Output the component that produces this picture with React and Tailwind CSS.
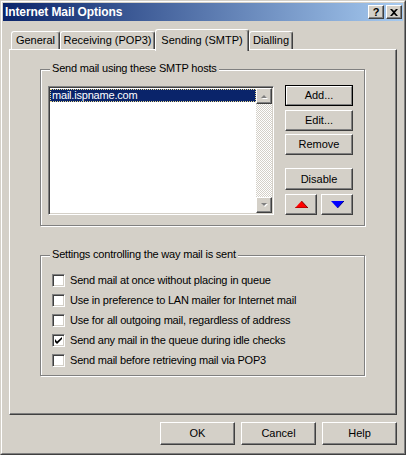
import React from 'react';

const FONT = { fontFamily: '"Liberation Sans", Arial, sans-serif' };

// classic raised 3D button edges
const raised =
  'border border-t-white border-l-white border-r-[#404040] border-b-[#404040] shadow-[inset_-1px_-1px_#808080]';
const sunken =
  'border border-t-[#808080] border-l-[#808080] border-r-white border-b-white shadow-[inset_1px_1px_#404040,inset_-1px_-1px_#d4d0c8]';

function Button({ children, className = '', isDefault = false }) {
  if (isDefault) {
    return (
      <div className={`border border-black ${className}`}>
        <div className="h-full w-full border border-t-white border-l-white border-r-[#808080] border-b-[#808080] flex items-center justify-center text-[11px] text-black">
          {children}
        </div>
      </div>
    );
  }
  return (
    <div className={`${raised} flex items-center justify-center text-[11px] text-black ${className}`}>
      {children}
    </div>
  );
}

function Group({ label, className = '', children }) {
  return (
    <div
      className={`relative border border-[#808080] shadow-[inset_1px_1px_#fff,1px_1px_#fff] ${className}`}
    >
      <span className="absolute -top-[8px] left-[9px] px-[2px] bg-[#d4d0c8] text-[11px] leading-[13px] text-black tracking-[-0.2px]">
        {label}
      </span>
      {children}
    </div>
  );
}

function ScrollArrow({ up }) {
  return (
    <svg width="7" height="5" viewBox="0 0 7 5">
      {up ? (
        <>
          <polygon points="1,5 4,2 7,5" fill="#fff" />
          <polygon points="0,4 3,1 6,4" fill="#808080" />
        </>
      ) : (
        <>
          <polygon points="1,1 4,4 7,1" fill="#fff" />
          <polygon points="0,0 3,3 6,0" fill="#808080" />
        </>
      )}
    </svg>
  );
}

function Checkbox({ checked, label }) {
  return (
    <div className="flex items-center h-[13px]">
      <div className={`w-[13px] h-[13px] bg-white ${sunken} flex items-center justify-center`}>
        {checked && (
          <svg width="7" height="7" viewBox="0 0 7 7">
            <path d="M0 2v3l2 2 5-5V0L2 4.5Z" fill="#000" />
          </svg>
        )}
      </div>
      <span className="ml-[5px] text-[11px] text-black tracking-[-0.2px] leading-[13px]">{label}</span>
    </div>
  );
}

function Tab({ label, selected, width }) {
  if (selected) {
    return (
      <div
        className={`${width} relative z-10 -mb-[2px] h-[22px] bg-[#d4d0c8] border-t border-l border-r border-t-white border-l-white border-r-[#404040] rounded-t-[3px] shadow-[inset_-1px_0_#808080] flex items-start justify-center pt-[2px] text-[11px] text-black`}
      >
        {label}
      </div>
    );
  }
  return (
    <div
      className={`${width} h-[18px] border-t border-l border-r border-t-white border-l-white border-r-[#404040] rounded-t-[3px] shadow-[inset_-1px_0_#808080] flex items-center justify-center text-[11px] text-black`}
    >
      {label}
    </div>
  );
}

export default function App() {
  const options = [
    { label: 'Send mail at once without placing in queue', checked: false },
    { label: 'Use in preference to LAN mailer for Internet mail', checked: false },
    { label: 'Use for all outgoing mail, regardless of address', checked: false },
    { label: 'Send any mail in the queue during idle checks', checked: true },
    { label: 'Send mail before retrieving mail via POP3', checked: false },
  ];

  return (
    <div
      className="w-[406px] h-[455px] bg-[#d4d0c8] border border-t-[#d4d0c8] border-l-[#d4d0c8] border-r-[#404040] border-b-[#404040] select-none"
      style={FONT}
    >
      <div className="h-full border border-t-white border-l-white border-r-[#808080] border-b-[#808080] p-px flex flex-col">
        {/* title bar */}
        <div className="h-[18px] flex items-center bg-[linear-gradient(to_right,#0a246a,#a6caf0)] pl-[2px] pr-[1px]">
          <span className="text-white font-bold text-[12px] leading-none tracking-[-0.1px]">Internet Mail Options</span>
          <div className="ml-auto flex gap-[2px]">
            <div className={`w-[16px] h-[14px] bg-[#d4d0c8] ${raised} flex items-center justify-center`}>
              <span className="text-[11px] font-bold leading-none text-black">?</span>
            </div>
            <div className={`w-[16px] h-[14px] bg-[#d4d0c8] ${raised} flex items-center justify-center`}>
              <svg width="8" height="7" viewBox="0 0 8 7">
                <path d="M0 0h2l2 2 2-2h2L5 3.5 8 7H6L4 5 2 7H0l3-3.5Z" fill="#000" />
              </svg>
            </div>
          </div>
        </div>

        {/* tabs + panel */}
        <div className="px-[6px]">
          <div className="h-[28px] flex items-end pl-[2px]">
            <Tab label="General" width="w-[49px]" />
            <Tab label="Receiving (POP3)" width="w-[95px]" />
            <Tab label="Sending (SMTP)" width="w-[94px]" selected />
            <Tab label="Dialling" width="w-[44px]" />
          </div>
          <div className={`h-[366px] ${raised} pl-[30px] pt-[19px]`}>
            <Group label="Send mail using these SMTP hosts" className="w-[325px] h-[157px]">
              <div className="flex pl-[7px] pt-[16px]">
                <div className={`w-[226px] h-[129px] bg-white ${sunken} p-px flex`}>
                  <div className="flex-1 pt-[1px]">
                    <div className="h-[13px] bg-[#0a246a] border border-dotted border-[#e8d890] text-white text-[11px] leading-[11px] pl-[1px] tracking-[-0.2px]">
                      mail.ispname.com
                    </div>
                  </div>
                  <div className="w-[16px] flex flex-col bg-[repeating-conic-gradient(#fff_0_25%,#d4d0c8_0_50%)] bg-[length:2px_2px]">
                    <div className={`h-[16px] bg-[#d4d0c8] ${raised} flex items-center justify-center`}>
                      <ScrollArrow up />
                    </div>
                    <div className="flex-1" />
                    <div className={`h-[16px] bg-[#d4d0c8] ${raised} flex items-center justify-center`}>
                      <ScrollArrow />
                    </div>
                  </div>
                </div>
                <div className="ml-[11px] -mt-px w-[68px] flex flex-col">
                  <Button isDefault className="h-[21px]">Add...</Button>
                  <Button className="h-[21px] mt-[4px]">Edit...</Button>
                  <Button className="h-[21px] mt-[3px]">Remove</Button>
                  <Button className="h-[22px] mt-[13px]">Disable</Button>
                  <div className="flex justify-between mt-[4px]">
                    <Button className="w-[32px] h-[21px]">
                      <svg width="13" height="7" viewBox="0 0 13 7">
                        <polygon points="0,7 6.5,0 13,7" fill="#ff0000" />
                        <polyline points="6.5,0 13,7 0,7" fill="none" stroke="#800000" strokeWidth="1" />
                      </svg>
                    </Button>
                    <Button className="w-[32px] h-[21px]">
                      <svg width="13" height="7" viewBox="0 0 13 7">
                        <polygon points="0,0 13,0 6.5,7" fill="#0000ff" />
                        <polyline points="13,0 6.5,7" fill="none" stroke="#000080" strokeWidth="1" />
                      </svg>
                    </Button>
                  </div>
                </div>
              </div>
            </Group>

            <Group label="Settings controlling the way mail is sent" className="w-[325px] h-[121px] mt-[29px]">
              <div className="flex flex-col gap-[7px] pl-[11px] pt-[18px]">
                {options.map((o) => (
                  <Checkbox key={o.label} label={o.label} checked={o.checked} />
                ))}
              </div>
            </Group>
          </div>

          {/* dialog buttons */}
          <div className="flex justify-end gap-[6px] mt-[7px]">
            <Button className="w-[75px] h-[23px]">OK</Button>
            <Button className="w-[75px] h-[23px]">Cancel</Button>
            <Button className="w-[75px] h-[23px]">Help</Button>
          </div>
        </div>
      </div>
    </div>
  );
}
